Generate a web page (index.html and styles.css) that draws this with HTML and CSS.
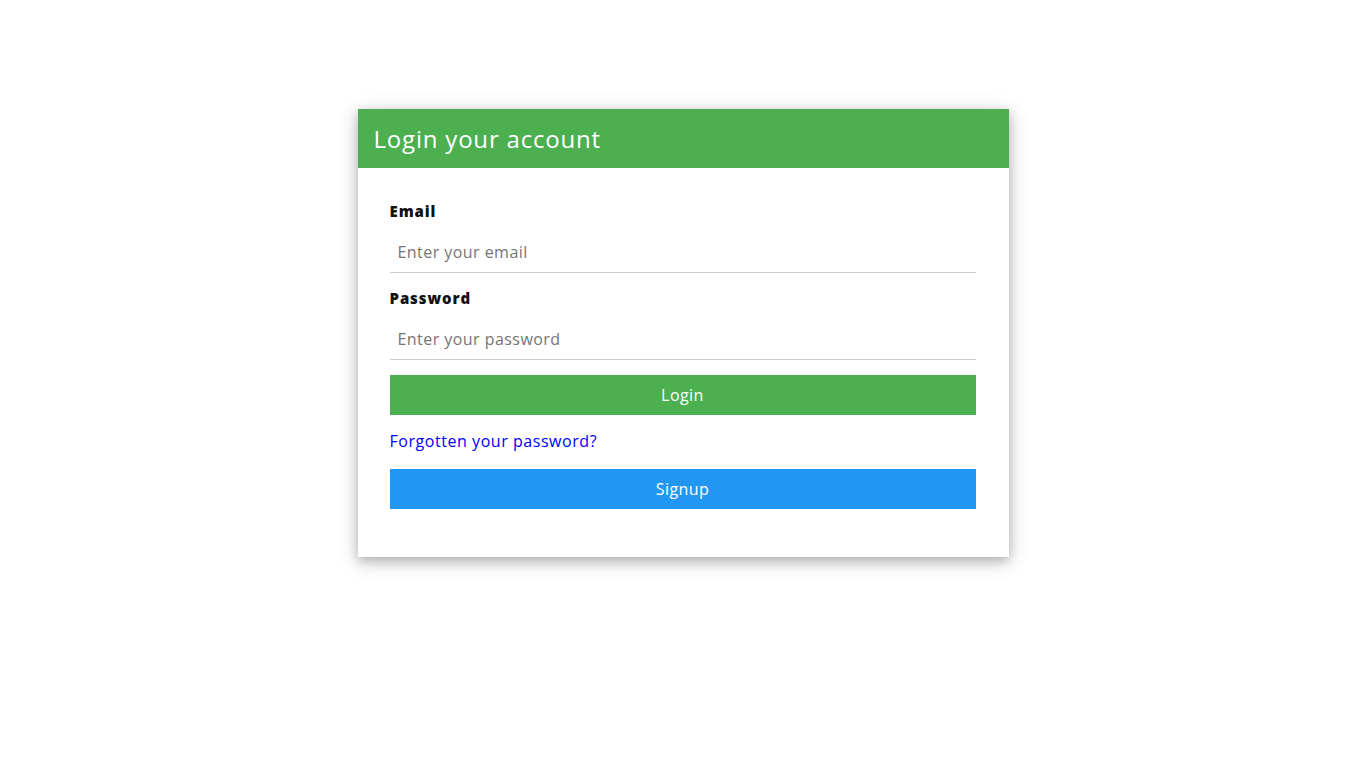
FILE: index.html
```html
<!DOCTYPE html>
<html>
<head>
<meta charset="utf-8">
<link rel="stylesheet" href="styles.css">
</head>
<body>
<div class="card">
  <div class="card-header">Login your account</div>
  <form class="card-body">
    <label class="label">Email</label>
    <input class="input" type="text" placeholder="Enter your email">
    <label class="label label-pw">Password</label>
    <input class="input" type="password" placeholder="Enter your password">
    <button class="btn btn-green" type="button">Login</button>
    <a class="link" href="#">Forgotten your password?</a>
    <button class="btn btn-blue" type="button">Signup</button>
  </form>
</div>
</body>
</html>
```

FILE: styles.css
```css
* { box-sizing: border-box; }
html, body { height: 100%; }
body {
  margin: 0;
  padding-top: 109px;
  background: #fff;
  font-family: "Open Sans", "Liberation Sans", sans-serif;
}
.card {
  width: 651px;
  margin: 0 auto;
  background: #fff;
  box-shadow: 0 4px 10px 0 rgba(0,0,0,0.2), 0 4px 20px 0 rgba(0,0,0,0.19);
}
.card-header {
  height: 59px;
  background: #4CAF50;
  color: #fff;
  font-size: 24px;
  letter-spacing: 0.8px;
  line-height: 59px;
  padding-left: 16px;
}
.card-body {
  display: flex;
  flex-direction: column;
  padding: 32px 33px 48px 32px;
}
.label {
  font-size: 15px;
  font-weight: 800;
  color: #111;
  line-height: 22px;
  letter-spacing: 0.9px;
}
.label-pw { margin-top: 14px; }
.input {
  height: 41px;
  margin-top: 10px;
  border: none;
  border-bottom: 1px solid #ccc;
  padding: 0 8px;
  font-family: inherit;
  font-size: 16px;
  letter-spacing: 0.45px;
  color: #333;
  outline: none;
}
.input::placeholder { color: #757575; }
.btn {
  height: 40px;
  border: none;
  color: #fff;
  font-family: inherit;
  font-size: 16px;
  letter-spacing: 0.45px;
  cursor: pointer;
}
.btn-green { background: #4CAF50; margin-top: 15px; }
.btn-blue { background: #2196F3; margin-top: 17px; }
.link {
  margin-top: 15px;
  font-size: 16px;
  letter-spacing: 0.55px;
  line-height: 22px;
  color: #0000ff;
  text-decoration: none;
}
```
